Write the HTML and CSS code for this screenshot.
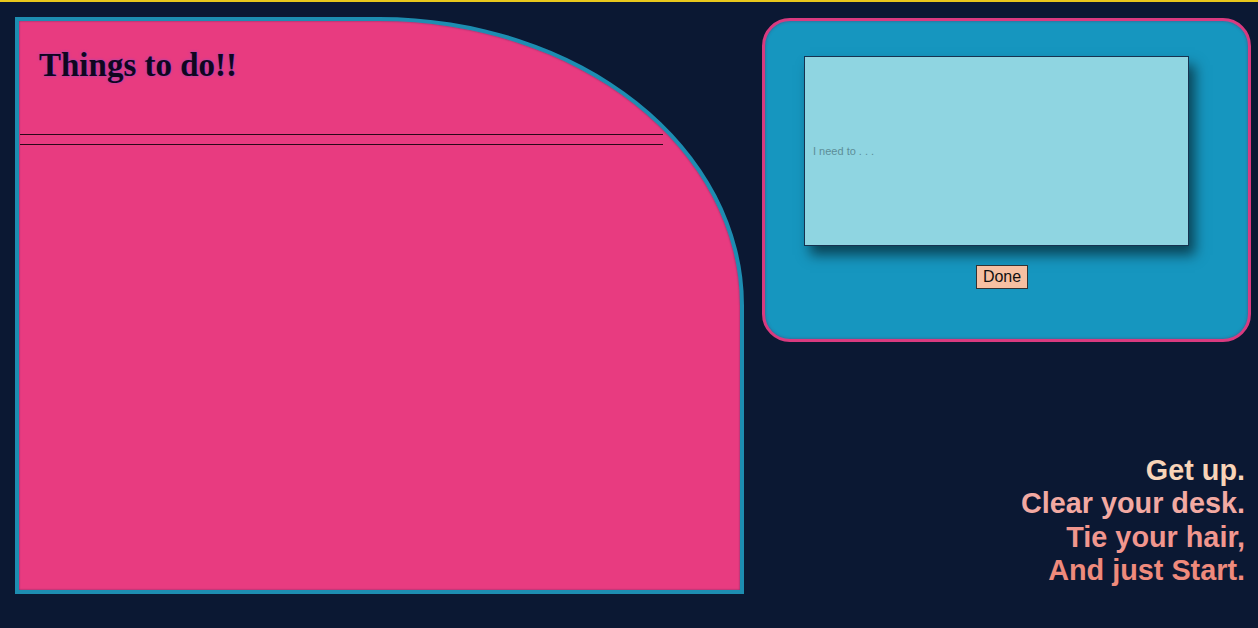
FILE: index.html
```html
<!DOCTYPE html>
<html lang="en">
<head>
<meta charset="utf-8">
<title>Things to do</title>
<link rel="stylesheet" href="styles.css">
</head>
<body>
<main class="page">
  <section class="todo-card">
    <h1 class="todo-title">Things to do!!</h1>
    <div class="todo-rule"></div>
  </section>
  <aside class="side">
    <form class="entry-panel">
      <input class="entry-input" type="text" placeholder="I need to . . .">
      <div class="entry-actions">
        <button class="done-btn" type="button">Done</button>
      </div>
    </form>
    <p class="quote">
      <span class="q1">Get up.</span>
      <span class="q2">Clear your desk.</span>
      <span class="q3">Tie your hair,</span>
      <span class="q4">And just Start.</span>
    </p>
  </aside>
</main>
</body>
</html>
```

FILE: styles.css
```css
* { box-sizing: border-box; }

html, body { height: 100%; }

body {
  margin: 0;
  background: #0b1833;
  border-top: 2px solid #e9c81c;
  font-family: "Liberation Sans", Arial, sans-serif;
  overflow: hidden;
}

.page {
  display: flex;
  gap: 18px;
  padding: 15px 7px 0 15px;
}

.todo-card {
  flex: 0 0 729px;
  height: 577px;
  background: #e83b80;
  border: 4px solid #1d8db1;
  border-top-right-radius: 50%;
  box-shadow: inset 0 0 2px rgba(10, 40, 80, 0.6);
}

.todo-title {
  margin: 26px 0 0 20px;
  font-family: "Liberation Serif", "Times New Roman", serif;
  font-size: 33px;
  font-weight: bold;
  color: #10061f;
  text-shadow: 0 0 3px #a046b8, 0 0 1px #a046b8;
}

.todo-rule {
  width: 643px;
  height: 11px;
  margin: 50px 0 0 1px;
  border-top: 1px solid #2a0818;
  border-bottom: 1px solid #2a0818;
}

.side {
  flex: 0 0 489px;
  display: flex;
  flex-direction: column;
}

.entry-panel {
  margin: 1px 0 0 0;
  height: 324px;
  background: #1696bf;
  border: 3px solid #d93a7f;
  border-radius: 28px;
  padding: 35px 48px 0 39px;
  box-shadow: inset 0 0 3px rgba(120, 20, 70, 0.5);
}

.entry-input {
  display: block;
  width: 385px;
  height: 190px;
  margin: 0;
  padding: 0 8px;
  background: #8fd5e1;
  border: 1px solid #173250;
  font-family: "Liberation Sans", Arial, sans-serif;
  font-size: 11px;
  box-shadow: 6px 9px 12px rgba(0, 0, 0, 0.55);
  outline: none;
}

.entry-input::placeholder {
  color: #5d8e98;
}

.entry-actions {
  margin-top: 19px;
  text-align: center;
}

.done-btn {
  font-family: "Liberation Sans", Arial, sans-serif;
  font-size: 16px;
  color: #111;
  background: #f6c0a2;
  border: 1px solid #333;
  padding: 2px 6px;
  border-radius: 0;
}

.quote {
  margin: 112px 0 0 0;
  padding-right: 6px;
  text-align: right;
  font-family: "Liberation Sans", Arial, sans-serif;
  font-weight: bold;
  font-size: 28.8px;
  line-height: 33.3px;
}

.quote span { display: block; }
.q1 { color: #f8d4b8; }
.q2 { color: #f2a9a2; }
.q3 { color: #f1968e; }
.q4 { color: #ef8a7c; }
```
